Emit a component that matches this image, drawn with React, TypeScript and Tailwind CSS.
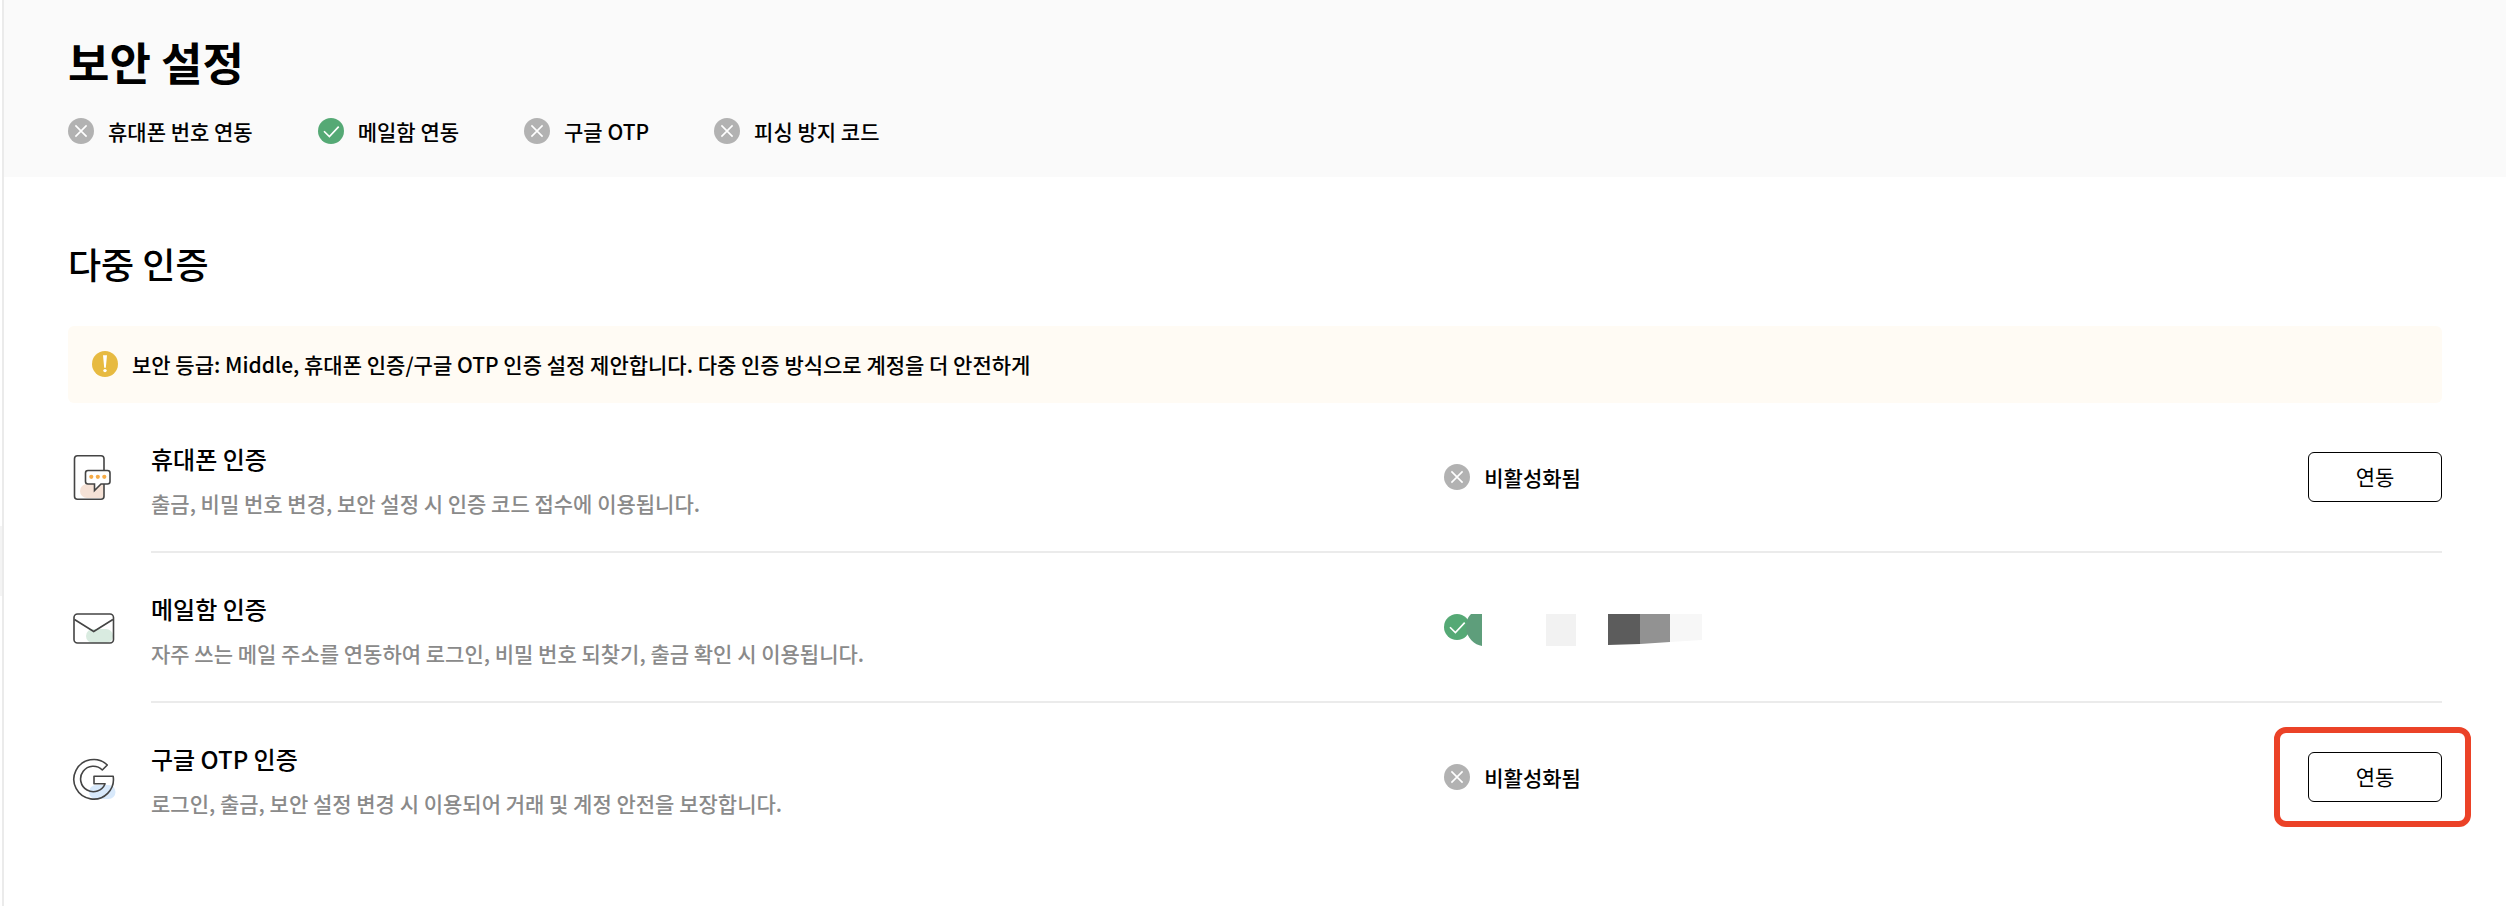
import type { ReactNode } from "react";

type Status = "on" | "off";

type AuthMethod = {
  id: string;
  title: string;
  description: string;
  icon: ReactNode;
  status: ReactNode;
  canLink: boolean;
  highlighted?: boolean;
};

function StatusIcon({ status }: { status: Status }) {
  return (
    <svg viewBox="0 0 26 26" className="size-[26px] shrink-0" fill="none" aria-hidden="true">
      <circle cx="13" cy="13" r="13" fill={status === "on" ? "#55a975" : "#b2b2b2"} />
      {status === "on" ? (
        <path d="M6 13.2l5.4 5.4 9.3-10" stroke="#fff" strokeWidth="1.6" />
      ) : (
        <path d="M7.4 7.4l11.2 11.2M18.6 7.4L7.4 18.6" stroke="#fff" strokeWidth="1.6" />
      )}
    </svg>
  );
}

function WarningIcon() {
  return (
    <svg viewBox="0 0 26 26" className="size-[26px] shrink-0" aria-hidden="true">
      <circle cx="13" cy="13" r="13" fill="#e7ba41" />
      <path d="M11 4.2h4l-1.200 12.600h-1.600z" fill="#fff" />
      <circle cx="13" cy="19.600" r="1.700" fill="#fff" />
    </svg>
  );
}

function PhoneIcon() {
  return (
    <svg viewBox="0 0 44 48" className="h-12 w-11" fill="none" aria-hidden="true">
      <path d="M15 30h17v14H15a7 7 0 0 1 0-14z" fill="#f6e2d6" />
      <rect x="2.500" y="1.800" width="29.500" height="43.400" rx="3" stroke="#444" strokeWidth="1.600" />
      <path
        d="M16 16.500h19.500a2.500 2.500 0 0 1 2.500 2.500v8.500a2.500 2.500 0 0 1-2.500 2.500H29l-6.500 6.500V30H16a2.500 2.500 0 0 1-2.500-2.500V19a2.500 2.500 0 0 1 2.500-2.500z"
        fill="#fff"
        stroke="#444"
        strokeWidth="1.600"
      />
      <g fill="#f6ab46">
        <circle cx="19.300" cy="22.800" r="2.100" />
        <circle cx="25.800" cy="22.800" r="2.100" />
        <circle cx="32.300" cy="22.800" r="2.100" />
      </g>
    </svg>
  );
}

function MailIcon() {
  return (
    <svg viewBox="0 0 44 48" className="h-12 w-11" fill="none" aria-hidden="true">
      <rect x="14" y="25" width="27" height="14" rx="7" fill="#d9ebe0" />
      <rect x="2" y="10" width="39.500" height="29" rx="3.500" stroke="#444" strokeWidth="1.600" />
      <path d="M2.500 15.500l19.200 12 19.200-12" stroke="#444" strokeWidth="1.600" />
    </svg>
  );
}

function GoogleIcon() {
  return (
    <svg viewBox="0 0 44 48" className="h-12 w-11" fill="none" aria-hidden="true">
      <rect x="17" y="31" width="26.500" height="14" rx="7" fill="#d8e9fb" />
      <path
        d="M35.300 11A19.800 19.800 0 1 0 41.200 22.300H22V29.700H33.100A12.700 12.700 0 1 1 30.300 16z"
        stroke="#444"
        strokeWidth="1.600"
        strokeLinejoin="round"
      />
    </svg>
  );
}

function DisabledStatus() {
  return (
    <div className="flex items-center gap-[14px]">
      <StatusIcon status="off" />
      <span className="text-[21px] leading-8 font-medium">비활성화됨</span>
    </div>
  );
}

// Linked address, covered by mosaic tiles
function MaskedStatus() {
  return (
    <div className="relative">
      <StatusIcon status="on" />
      <svg
        viewBox="0 0 236 32"
        className="absolute top-0 left-[22px] h-8 w-[236px]"
        role="img"
        aria-label="메일함 연동"
      >
        <path d="M5 0h11v32C9 31 0 24 0 13c0-6 2-10 5-13z" fill="#5e9e7b" />
        <path d="M80 0h30v32H80z" fill="#f2f2f2" />
        <path d="M142 0h32v30l-32 1z" fill="#5c5c5c" />
        <path d="M174 0h30v28l-30 2z" fill="#929292" />
        <path d="M204 0h32v26l-32 2z" fill="#f7f7f7" />
      </svg>
    </div>
  );
}

const SUMMARY: { label: string; status: Status }[] = [
  { label: "휴대폰 번호 연동", status: "off" },
  { label: "메일함 연동", status: "on" },
  { label: "구글 OTP", status: "off" },
  { label: "피싱 방지 코드", status: "off" },
];

const METHODS: AuthMethod[] = [
  {
    id: "phone",
    title: "휴대폰 인증",
    description: "출금, 비밀 번호 변경, 보안 설정 시 인증 코드 접수에 이용됩니다.",
    icon: <PhoneIcon />,
    status: <DisabledStatus />,
    canLink: true,
  },
  {
    id: "mail",
    title: "메일함 인증",
    description: "자주 쓰는 메일 주소를 연동하여 로그인, 비밀 번호 되찾기, 출금 확인 시 이용됩니다.",
    icon: <MailIcon />,
    status: <MaskedStatus />,
    canLink: false,
  },
  {
    id: "google",
    title: "구글 OTP 인증",
    description: "로그인, 출금, 보안 설정 변경 시 이용되어 거래 및 계정 안전을 보장합니다.",
    icon: <GoogleIcon />,
    status: <DisabledStatus />,
    canLink: true,
    highlighted: true,
  },
];

function MethodRow({ method }: { method: AuthMethod }) {
  return (
    <li className="group flex items-stretch">
      <div className="flex w-[83px] shrink-0 items-center pl-1">{method.icon}</div>
      <div className="grid flex-1 grid-cols-[35fr_27fr] items-center border-b-2 border-[#ebebeb] group-last:border-transparent">
        <div className="pt-[38px] pb-8">
          <h3 className="text-2xl leading-9 font-medium">{method.title}</h3>
          <p className="mt-[10px] text-[21px] leading-8 font-medium text-[#8a8a8a]">{method.description}</p>
        </div>
        <div className="flex items-center justify-between">
          {method.status}
          {method.canLink && (
            <div className="relative">
              <button
                type="button"
                className="block h-[50px] w-[134px] rounded-md border border-black bg-white text-[21px] hover:bg-gray-50"
              >
                연동
              </button>
              {method.highlighted && (
                <div className="pointer-events-none absolute -inset-y-[25px] -right-[29px] -left-[34px] rounded-xl border-[6px] border-[#eb4227]" />
              )}
            </div>
          )}
        </div>
      </div>
    </li>
  );
}

export default function App() {
  return (
    <div className="flex min-h-screen bg-white font-['Noto_Sans_CJK_KR',sans-serif] text-black">
      {/* Edge of the side menu with its active item */}
      <div className="w-[2px] shrink-0 pt-[526px]">
        <div className="h-[70px] bg-[#f4f4f4]" />
      </div>

      <div className="flex-1 border-l-2 border-[#ebebeb]">
        {/* Page header */}
        <header className="bg-[#fafafa] px-16 pt-8 pb-[30px]">
          <h1 className="text-[45px] leading-[60px] font-bold">보안 설정</h1>
          <ul className="mt-[23px] flex gap-[65px]">
            {SUMMARY.map((item) => (
              <li key={item.label} className="flex items-center gap-[14px]">
                <StatusIcon status={item.status} />
                <span className="text-[21px] leading-8 font-medium">{item.label}</span>
              </li>
            ))}
          </ul>
        </header>

        {/* Multi-factor methods */}
        <main className="px-16 pt-[62px]">
          <h2 className="text-[36px] leading-[48px] font-medium">다중 인증</h2>
          <div className="mt-[39px] flex items-center gap-[14px] rounded-md bg-[#fffbf4] px-6 pt-[22px] pb-[23px]" role="status">
            <WarningIcon />
            <p className="text-[21px] leading-8 font-medium">
              보안 등급: Middle, 휴대폰 인증/구글 OTP 인증 설정 제안합니다. 다중 인증 방식으로 계정을 더 안전하게
            </p>
          </div>
          <ul>
            {METHODS.map((method) => (
              <MethodRow key={method.id} method={method} />
            ))}
          </ul>
        </main>
      </div>
    </div>
  );
}
